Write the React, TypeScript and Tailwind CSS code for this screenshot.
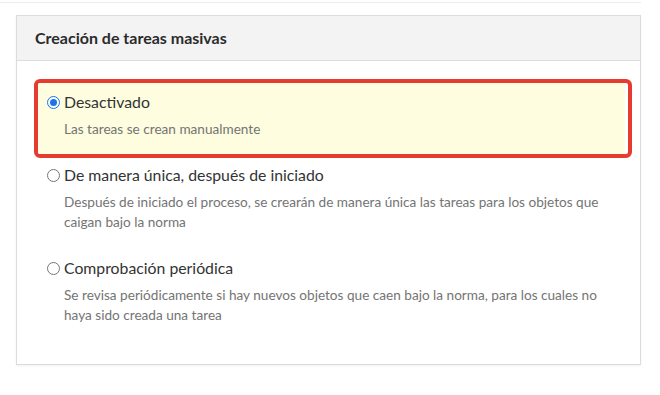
import React from "react";

function Radio({ checked }: { checked?: boolean }) {
  if (checked) {
    return (
      <span className="inline-flex h-[13px] w-[13px] shrink-0 items-center justify-center rounded-full border-[1.5px] border-[#1a73e8] bg-white">
        <span className="h-[7px] w-[7px] rounded-full bg-[#1a73e8]" />
      </span>
    );
  }
  return <span className="inline-block h-[13px] w-[13px] shrink-0 rounded-full border border-[#767676] bg-white" />;
}

function Option({ checked, label, desc }: { checked?: boolean; label: string; desc: React.ReactNode }) {
  return (
    <div>
      <div className="flex items-center gap-[4px] text-[15.8px] leading-[20px] text-[#333]">
        <Radio checked={checked} />
        <span>{label}</span>
      </div>
      <div className="mt-[7px] pl-[17px] text-[13.6px] leading-[20px] text-[#747474]">{desc}</div>
    </div>
  );
}

export default function App() {
  return (
    <div className="h-[395px] w-[660px] bg-white" style={{ fontFamily: "Lato, 'Open Sans', sans-serif" }}>
      <div className="h-[2px]" />
      <div className="h-px w-[641px] bg-[#ececec]" />
      <div className="ml-[16px] mt-[12px] w-[625px] border border-[#dcdcdc] bg-white shadow-[0_1px_2px_rgba(0,0,0,0.06)]">
        <div className="flex h-[45px] items-center border-b border-[#dcdcdc] bg-[#f3f3f3] px-[18px]">
          <span className="text-[16px] font-bold text-[#2b2b2b]">Creación de tareas masivas</span>
        </div>
        <div className="pb-[39px] pt-[18px]">
          <div className="ml-[17px] w-[598px] rounded-[6px] border-4 border-[#e53b30] bg-white">
            <div className="mr-[3px] rounded-[2px] bg-[#fefddf] pb-[15px] pl-[9px] pt-[9px]">
              <Option checked label="Desactivado" desc="Las tareas se crean manualmente" />
            </div>
          </div>
          <div className="ml-[30px] mt-[7px] w-[570px]">
            <Option
              label="De manera única, después de iniciado"
              desc="Después de iniciado el proceso, se crearán de manera única las tareas para los objetos que caigan bajo la norma"
            />
          </div>
          <div className="ml-[30px] mt-[26px] w-[570px]">
            <Option
              label="Comprobación periódica"
              desc="Se revisa periódicamente si hay nuevos objetos que caen bajo la norma, para los cuales no haya sido creada una tarea"
            />
          </div>
        </div>
      </div>
    </div>
  );
}
